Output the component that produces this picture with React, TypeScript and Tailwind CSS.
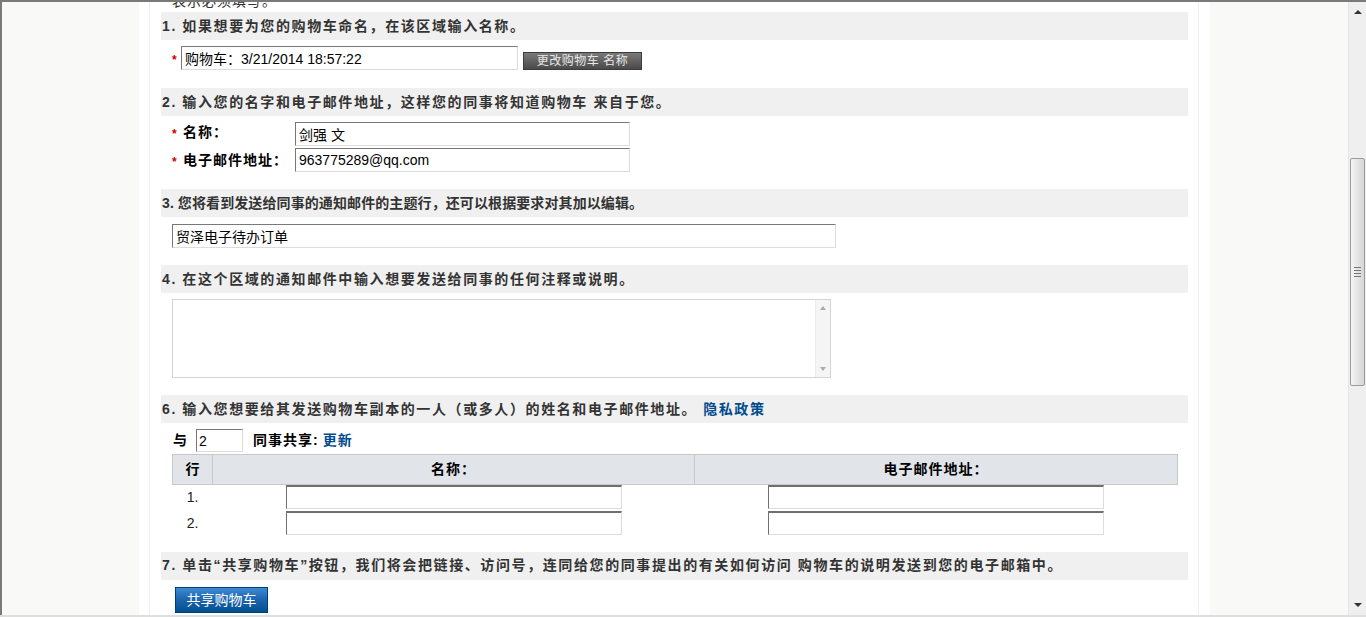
import React from 'react';

const font = "font-['Liberation_Sans','Noto_Sans_CJK_SC',sans-serif]";

const inputCls =
  'block h-[24px] border border-t-[#787878] border-l-[#787878] border-r-[#dcdcdc] border-b-[#dcdcdc] bg-white px-[3px] text-[14px] text-black outline-none';

const tableInputCls =
  'block mx-auto h-[24px] border border-t-2 border-t-[#707070] border-l-[#707070] border-r-[#dcdcdc] border-b-[#dcdcdc] bg-white px-[3px] text-[14px] outline-none';

function SectionHeader({ children, tight }: { children: React.ReactNode; tight?: boolean }) {
  return (
    <div
      className={`h-[28px] bg-[#f0f0f0] pl-px flex items-center text-[14px] font-bold text-[#333] ${
        tight ? 'tracking-[0.1px]' : 'tracking-[1.6px]'
      }`}
    >
      {children}
    </div>
  );
}

function Star() {
  return <span className="w-[9px] text-[#cc0000] text-[12px] font-bold leading-none pt-[3px]">*</span>;
}

function RowNumber({ n }: { n: number }) {
  return <td className="h-[26px] p-0 text-center align-top pt-[4px] text-[14px] leading-[16px] text-[#222]">{n}.</td>;
}

export default function App() {
  return (
    <div className={`${font} w-[1366px] h-[617px] overflow-hidden flex flex-col bg-[#f9f9f7]`}>
      {/* window frame top */}
      <div className="h-[2px] bg-[#7a7a7a] shrink-0" />

      <div className="flex flex-1 min-h-0">
        <div className="w-[2px] bg-[#7a7a7a] shrink-0" />
        <div className="w-[137px] shrink-0" />

        {/* Main white column */}
        <div className="w-[1071px] shrink-0 bg-white flex">
          <div className="w-[10px] shrink-0" />
          <div className="w-[1050px] shrink-0 border-l border-r border-[#eeeeee] pl-[11px] pr-[10px] overflow-hidden">
            {/* intro line (scrolled out of view) */}
            <div className="h-[10px] overflow-hidden">
              <div className="-mt-[11px] pl-[11px] text-[14px] leading-[20px] text-[#333] tracking-[1px]">
                表示必须填写。
              </div>
            </div>

            {/* Section 1 */}
            <SectionHeader>1. 如果想要为您的购物车命名，在该区域输入名称。</SectionHeader>
            <div className="mt-[6px] h-[24px] flex items-end pl-[11px]">
              <div className="h-[24px] flex items-center">
                <Star />
              </div>
              <input className={`${inputCls} w-[337px]`} defaultValue="购物车：3/21/2014 18:57:22" />
              <button className="ml-[5px] h-[18px] w-[119px] bg-gradient-to-b from-[#7a7a7a] to-[#4a4a4a] border border-[#3c3c3c] text-[12px] leading-none text-[#e8e8e8] tracking-[0.5px]">
                更改购物车 名称
              </button>
            </div>

            {/* Section 2 */}
            <div className="mt-[18px]">
              <SectionHeader>2. 输入您的名字和电子邮件地址，这样您的同事将知道购物车 来自于您。</SectionHeader>
            </div>
            <div className="mt-[6px] pl-[11px] flex flex-col gap-[2px]">
              <div className="flex h-[24px]">
                <div className="w-[123px] flex items-center pb-[4px] text-[14px] font-bold text-black">
                  <Star />
                  <span className="ml-[2px] tracking-[1px]">名称：</span>
                </div>
                <input className={`${inputCls} w-[335px]`} defaultValue="剑强 文" />
              </div>
              <div className="flex h-[24px]">
                <div className="w-[123px] flex items-center text-[14px] font-bold text-black">
                  <Star />
                  <span className="ml-[2px] tracking-[1px]">电子邮件地址：</span>
                </div>
                <input className={`${inputCls} w-[335px]`} defaultValue="963775289@qq.com" />
              </div>
            </div>

            {/* Section 3 */}
            <div className="mt-[17px]">
              <SectionHeader tight>3. 您将看到发送给同事的通知邮件的主题行，还可以根据要求对其加以编辑。</SectionHeader>
            </div>
            <div className="mt-[7px] pl-[11px]">
              <input className={`${inputCls} w-[664px]`} defaultValue="贸泽电子待办订单" />
            </div>

            {/* Section 4 */}
            <div className="mt-[17px]">
              <SectionHeader>4. 在这个区域的通知邮件中输入想要发送给同事的任何注释或说明。</SectionHeader>
            </div>
            <div className="mt-[6px] ml-[11px] w-[659px] h-[79px] flex border border-[#d4d4d4]">
              <textarea className="block flex-1 resize-none outline-none text-[14px] p-[2px]" />
              <div className="w-[15px] bg-[#f5f5f5] border-l border-[#ececec] flex flex-col items-center justify-between py-[6px]">
                <span className="w-0 h-0 border-l-[3px] border-r-[3px] border-b-[4px] border-l-transparent border-r-transparent border-b-[#aaaaaa]" />
                <span className="w-0 h-0 border-l-[3px] border-r-[3px] border-t-[4px] border-l-transparent border-r-transparent border-t-[#aaaaaa]" />
              </div>
            </div>

            {/* Section 6 */}
            <div className="mt-[17px]">
              <SectionHeader>
                6. 输入您想要给其发送购物车副本的一人（或多人）的姓名和电子邮件地址。
                <span className="ml-[6px] text-[#004b8d]">隐私政策</span>
              </SectionHeader>
            </div>
            <div className="mt-[6px] pl-[12px] h-[23px] flex items-center text-[14px] font-bold text-black">
              <span>与</span>
              <input
                className="block ml-[9px] w-[47px] h-[23px] border border-t-[#787878] border-l-[#787878] border-r-[#dcdcdc] border-b-[#dcdcdc] px-[2px] text-[14px] font-normal outline-none"
                defaultValue="2"
              />
              <span className="ml-[10px] tracking-[1px]">同事共享:</span>
              <span className="ml-[4px] text-[#004b8d] tracking-[1px]">更新</span>
            </div>
            <table className="mt-[2px] ml-[11px] w-[1005px] border-collapse table-fixed">
              <colgroup>
                <col className="w-[40px]" />
                <col className="w-[482px]" />
                <col className="w-[483px]" />
              </colgroup>
              <thead>
                <tr className="bg-[#e1e4e9] text-[14px] font-bold text-black">
                  <th className="h-[30px] p-0 border border-[#c8c8c8] font-bold">行</th>
                  <th className="h-[30px] p-0 border border-[#c8c8c8] font-bold tracking-[1px]">名称：</th>
                  <th className="h-[30px] p-0 border border-[#c8c8c8] font-bold tracking-[1px]">电子邮件地址：</th>
                </tr>
              </thead>
              <tbody>
                {[1, 2].map((n) => (
                  <tr key={n}>
                    <RowNumber n={n} />
                    <td className="h-[26px] p-0 align-top">
                      <input className={`${tableInputCls} w-[336px]`} />
                    </td>
                    <td className="h-[26px] p-0 align-top">
                      <input className={`${tableInputCls} w-[336px]`} />
                    </td>
                  </tr>
                ))}
              </tbody>
            </table>

            {/* Section 7 */}
            <div className="mt-[15px]">
              <SectionHeader>
                7. 单击“共享购物车”按钮，我们将会把链接、访问号，连同给您的同事提出的有关如何访问 购物车的说明发送到您的电子邮箱中。
              </SectionHeader>
            </div>
            <div className="mt-[7px] pl-[14px]">
              <button className="block w-[93px] h-[26px] bg-gradient-to-b from-[#3d8ad3] via-[#1c64ad] to-[#00508f] border border-[#003e78] text-white text-[14px] leading-none">
                共享购物车
              </button>
            </div>
          </div>
          <div className="flex-1" />
        </div>

        <div className="flex-1" />

        {/* Browser scrollbar */}
        <div className="w-[18px] shrink-0 bg-[#efefef] border-l border-[#e6e6e6] relative">
          <span className="absolute left-[5px] top-[8px] w-0 h-0 border-l-[4px] border-r-[4px] border-b-[4px] border-l-transparent border-r-transparent border-b-[#333]" />
          <div className="absolute left-[1px] top-[156px] w-[15px] h-[228px] rounded-[2px] border border-[#9a9a9a] bg-gradient-to-r from-[#f4f4f4] to-[#d6d6d6] flex flex-col items-center justify-center gap-[2px]">
            <span className="w-[7px] h-px bg-[#777]" />
            <span className="w-[7px] h-px bg-[#777]" />
            <span className="w-[7px] h-px bg-[#777]" />
            <span className="w-[7px] h-px bg-[#777]" />
          </div>
          <span className="absolute left-[5px] bottom-[8px] w-0 h-0 border-l-[4px] border-r-[4px] border-t-[4px] border-l-transparent border-r-transparent border-t-[#333]" />
        </div>
      </div>

      <div className="h-[2px] bg-[#dedede] shrink-0" />
    </div>
  );
}
